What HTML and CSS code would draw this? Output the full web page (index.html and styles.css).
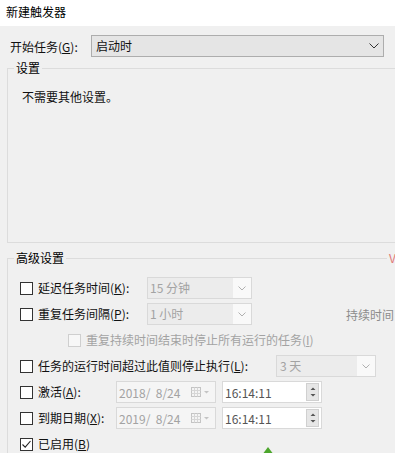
FILE: index.html
```html
<!DOCTYPE html>
<html lang="zh-CN">
<head>
<meta charset="UTF-8">
<meta name="viewport" content="width=device-width, initial-scale=1.0">
<title>新建触发器</title>
<link rel="stylesheet" href="styles.css">
</head>
<body>

<div class="title">新建触发器</div>

<div class="panel">
    <div class="start-row">
        <span class="start-label">开始任务(<u>G</u>):</span>
        <div class="combo combo-main">
            <span class="combo-text">启动时</span>
            <svg class="chev" width="10" height="6" viewBox="0 0 10 6"><path d="M0.5 0.5 L5 5 L9.5 0.5" fill="none" stroke="#333" stroke-width="1"/></svg>
        </div>
    </div>

    <fieldset class="group group-settings">
        <legend>设置</legend>
        <p class="note">不需要其他设置。</p>
    </fieldset>

    <fieldset class="group group-advanced">
        <legend>高级设置</legend>
        <span class="cut-mark">V</span>

        <div class="options">
            <div class="opt">
                <span class="box"></span>
                <span class="opt-label w-delay">延迟任务时间(<u>K</u>):</span>
                <div class="combo combo-off w-small">
                    <span class="combo-text">15 分钟</span>
                    <svg class="chev" width="8" height="5" viewBox="0 0 8 5"><path d="M0.5 0.5 L4 4 L7.5 0.5" fill="none" stroke="#b0b0b0" stroke-width="1"/></svg>
                </div>
            </div>

            <div class="opt">
                <span class="box"></span>
                <span class="opt-label w-delay">重复任务间隔(<u>P</u>):</span>
                <div class="combo combo-off w-small">
                    <span class="combo-text">1 小时</span>
                    <svg class="chev" width="8" height="5" viewBox="0 0 8 5"><path d="M0.5 0.5 L4 4 L7.5 0.5" fill="none" stroke="#b0b0b0" stroke-width="1"/></svg>
                </div>
                <span class="side-text">持续时间</span>
            </div>

            <div class="opt">
                <span class="box box-off sub"></span>
                <span class="opt-label dim">重复持续时间结束时停止所有运行的任务(<u>I</u>)</span>
            </div>

            <div class="opt">
                <span class="box"></span>
                <span class="opt-label w-stop">任务的运行时间超过此值则停止执行(<u>L</u>):</span>
                <div class="combo combo-off w-stopbox">
                    <span class="combo-text">3 天</span>
                    <svg class="chev" width="8" height="5" viewBox="0 0 8 5"><path d="M0.5 0.5 L4 4 L7.5 0.5" fill="none" stroke="#b0b0b0" stroke-width="1"/></svg>
                </div>
            </div>

            <div class="opt">
                <span class="box"></span>
                <span class="opt-label w-date">激活(<u>A</u>):</span>
                <div class="field date">
                    <span class="field-text">2018/&nbsp; 8/24</span>
                    <svg class="cal" width="18" height="10" viewBox="0 0 18 10"><rect x="0.5" y="0.5" width="9" height="9" fill="#f4f4f4" stroke="#c4c4c4"/><path d="M0.5 3.5 H9.5 M0.5 6.5 H9.5 M3.5 0.5 V9.5 M6.5 0.5 V9.5" stroke="#d6d6d6"/><path d="M13 4 L18 4 L15.5 6.5 Z" fill="#c4c4c4"/></svg>
                </div>
                <div class="field time">
                    <span class="field-text">16:14:11</span>
                    <span class="spin">
                        <svg width="10" height="14" viewBox="0 0 10 14"><path d="M2.5 5 L5 2.5 L7.5 5 Z M2.5 9 L5 11.5 L7.5 9 Z" fill="#555"/></svg>
                    </span>
                </div>
            </div>

            <div class="opt">
                <span class="box"></span>
                <span class="opt-label w-date">到期日期(<u>X</u>):</span>
                <div class="field date">
                    <span class="field-text">2019/&nbsp; 8/24</span>
                    <svg class="cal" width="18" height="10" viewBox="0 0 18 10"><rect x="0.5" y="0.5" width="9" height="9" fill="#f4f4f4" stroke="#c4c4c4"/><path d="M0.5 3.5 H9.5 M0.5 6.5 H9.5 M3.5 0.5 V9.5 M6.5 0.5 V9.5" stroke="#d6d6d6"/><path d="M13 4 L18 4 L15.5 6.5 Z" fill="#c4c4c4"/></svg>
                </div>
                <div class="field time">
                    <span class="field-text">16:14:11</span>
                    <span class="spin">
                        <svg width="10" height="14" viewBox="0 0 10 14"><path d="M2.5 5 L5 2.5 L7.5 5 Z M2.5 9 L5 11.5 L7.5 9 Z" fill="#555"/></svg>
                    </span>
                </div>
            </div>

            <div class="opt">
                <span class="box box-on">
                    <svg width="11" height="11" viewBox="0 0 11 11"><path d="M1.5 5.5 L4.2 8.2 L9.5 2" fill="none" stroke="#222" stroke-width="1.1"/></svg>
                </span>
                <span class="opt-label w-enabled">已启用(<u>B</u>)</span>
                <svg class="leaf" width="12" height="8" viewBox="0 0 12 8"><path d="M6 0 L12 8 L0 8 Z" fill="#4ca62c"/></svg>
            </div>
        </div>
    </fieldset>
</div>

</body>
</html>
```

FILE: styles.css
```css
body {
    margin: 0;
    background-color: #fff;
    font-family: "Noto Sans CJK SC", "Noto Sans", sans-serif;
    font-size: 12px;
    color: #111;
}

u {
    text-decoration: underline;
    text-underline-offset: 1px;
}

.title {
    height: 26px;
    line-height: 24px;
    padding-left: 6px;
    color: #000;
}

.panel {
    width: 395px;
    height: 427px;
    overflow: hidden;
    background-color: #f0f0f0;
    padding-top: 9px;
    box-sizing: border-box;
}

/* top row */
.start-row {
    display: flex;
    align-items: center;
    height: 22px;
    margin-left: 10px;
}

.start-label {
    width: 81px;
    flex-shrink: 0;
}

.combo {
    display: flex;
    align-items: center;
    height: 22px;
    box-sizing: border-box;
    flex-shrink: 0;
}

.combo-main {
    width: 293px;
    background-color: #e5e5e5;
    border: 1px solid #adadad;
    padding-left: 4px;
    padding-right: 4px;
}

.combo-text {
    flex: 1;
    line-height: 18px;
}

.combo-off {
    border: 1px solid #d9d9d9;
    background-color: #f9f9f9;
    padding-right: 5px;
    color: #a3a3a3;
}

.combo-off .combo-text {
    background-color: #ececec;
    padding-left: 2px;
    margin-right: 5px;
    height: 20px;
    line-height: 20px;
}

.w-small {
    width: 105px;
}

.w-stopbox {
    width: 100px;
}

.w-stopbox .combo-text {
    padding-left: 3px;
}

/* group boxes */
.group {
    margin: 3px 0 0 7px;
    width: 400px;
    min-width: 0;
    border: 1px solid #dcdcdc;
    padding: 13px 0 137px 6px;
    box-sizing: border-box;
}

.group legend {
    padding: 0 2px;
    line-height: 16px;
    color: #000;
}

.note {
    margin: 0 0 0 8px;
    line-height: 16px;
}

.group-advanced {
    position: relative;
    margin-top: 7px;
    padding: 11px 0 40px 6px;
}

.cut-mark {
    position: absolute;
    left: 379px;
    top: -16px;
    padding-left: 2px;
    background-color: #f0f0f0;
    color: #e07878;
    line-height: 16px;
}

.options {
    display: flex;
    flex-direction: column;
    gap: 4px;
    padding-left: 6px;
}

.opt {
    display: flex;
    align-items: center;
    height: 22px;
}

.box {
    display: flex;
    align-items: center;
    justify-content: center;
    width: 13px;
    height: 13px;
    box-sizing: border-box;
    border: 1px solid #333;
    background-color: #fff;
    margin-right: 5px;
    flex-shrink: 0;
}

.box-off {
    border-color: #cfcfcf;
    background-color: #f7f7f7;
}

.sub {
    margin-left: 48px;
}

.opt-label {
    flex-shrink: 0;
    white-space: nowrap;
    line-height: 18px;
}

.dim {
    color: #a3a3a3;
}

.w-delay {
    width: 109px;
}

.w-stop {
    width: 238px;
}

.w-date {
    width: 78px;
}

.w-enabled {
    width: 224px;
}

.side-text {
    margin-left: 94px;
    color: #8c8c8c;
    white-space: nowrap;
}

/* date and time fields */
.field {
    display: flex;
    align-items: center;
    width: 100px;
    height: 22px;
    box-sizing: border-box;
    border: 1px solid #d9d9d9;
    padding-left: 2px;
    flex-shrink: 0;
}

.field-text {
    flex: 1;
    white-space: nowrap;
}

.date {
    background-color: #f5f5f5;
    color: #a3a3a3;
    padding-right: 6px;
}

.time {
    margin-left: 6px;
    background-color: #fff;
    color: #555;
    padding-right: 2px;
}

.spin {
    display: flex;
    width: 11px;
    height: 16px;
    align-items: center;
    justify-content: center;
    background-color: #e6e6e6;
    border: 1px solid #d0d0d0;
}

.leaf {
    align-self: flex-end;
}
```
